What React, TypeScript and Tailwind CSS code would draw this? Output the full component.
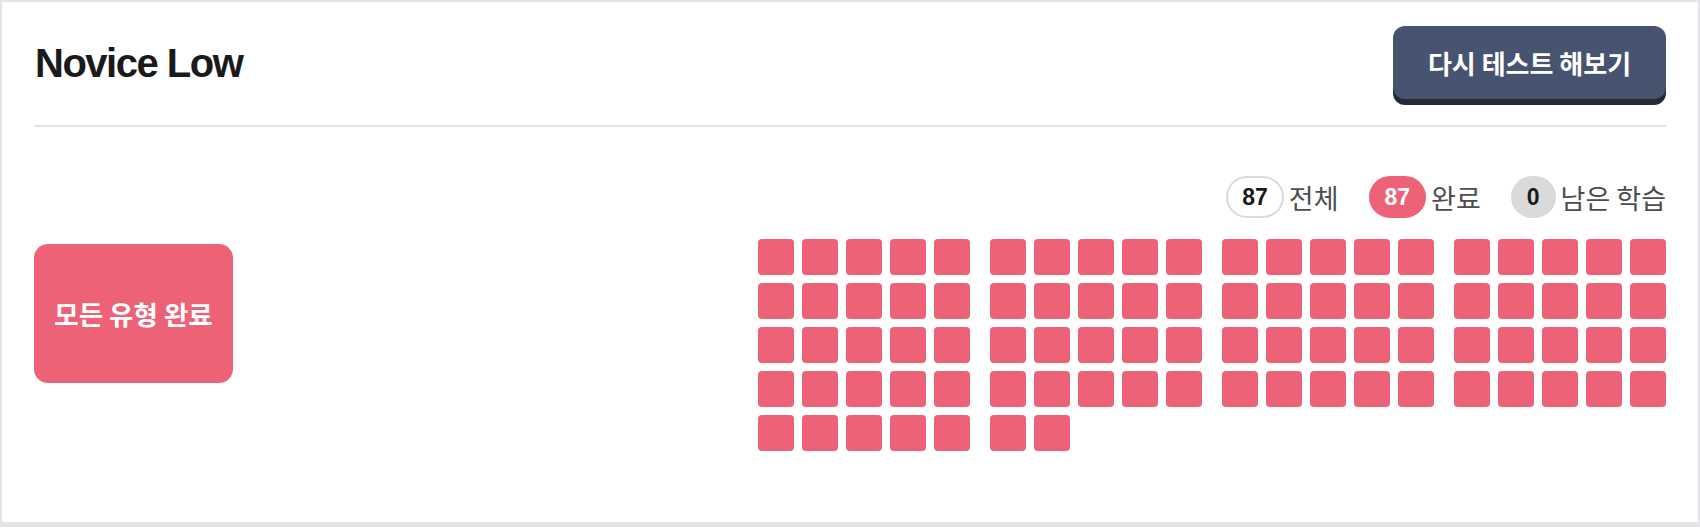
const KR = '"Noto Sans CJK KR", "Liberation Sans", sans-serif';
const EN = '"Liberation Sans", "Noto Sans CJK KR", sans-serif';

// 87 items split into groups of 25 (5 x 5)
const groups = [25, 22, 20, 20];

function StatBadge({ value, label, variant }: { value: number; label: string; variant: "outline" | "done" | "left" }) {
	const badgeClass =
		variant === "outline"
			? "border-[#d9d9d9] bg-white text-[#1a1a1a]"
			: variant === "done"
			? "border-[#ee6277] bg-[#ee6277] text-white"
			: "border-[#dadada] bg-[#dadada] text-[#1a1a1a]";
	return (
		<div className="flex items-center">
			<span
				className={`flex h-[42px] min-w-[43px] items-center justify-center rounded-full border-2 px-[14px] text-[23px] font-bold ${badgeClass}`}
				style={{ fontFamily: EN }}
			>
				{value}
			</span>
			<span className="ml-[5px] text-[27px] leading-none text-[#4d4d4d]" style={{ fontFamily: KR }}>
				{label}
			</span>
		</div>
	);
}

export default function App() {
	return (
		<div className="bg-[#e3e3e8] px-[2px] pt-[2px] pb-[5px]">
			<div className="bg-white px-8">
				{/* Header */}
				<div className="flex items-center justify-between border-b-2 border-[#e2e2e2] pt-6 pb-[26px]">
					<h1
						className="pl-[1px] text-[40px] leading-none font-bold tracking-[-1.5px] text-[#1a1a1a]"
						style={{ fontFamily: EN }}
					>
						Novice Low
					</h1>
					<button
						className="h-[73px] w-[273px] rounded-[12px] bg-[#475470] text-[26px] font-bold text-white shadow-[0_6px_0_#252a35]"
						style={{ fontFamily: KR }}
					>
						다시 테스트 해보기
					</button>
				</div>

				{/* Body */}
				<div className="flex items-center justify-between pt-[49px] pb-[71px]">
					<div
						className="flex h-[139px] w-[199px] items-center justify-center rounded-[14px] bg-[#ee6277] text-[26.5px] font-bold text-white"
						style={{ fontFamily: KR }}
					>
						모든 유형 완료
					</div>

					<div className="flex flex-col items-end">
						<div className="flex items-center gap-[30px]">
							<StatBadge value={87} label="전체" variant="outline" />
							<StatBadge value={87} label="완료" variant="done" />
							<StatBadge value={0} label="남은 학습" variant="left" />
						</div>

						<div className="mt-[21px] flex items-start gap-5">
							{groups.map((count, g) => (
								<div key={g} className="grid w-[212px] grid-cols-5 gap-2">
									{Array.from({ length: count }).map((_, i) => (
										<div key={i} className="h-9 w-9 rounded bg-[#ee6277]" />
									))}
								</div>
							))}
						</div>
					</div>
				</div>
			</div>
		</div>
	);
}
